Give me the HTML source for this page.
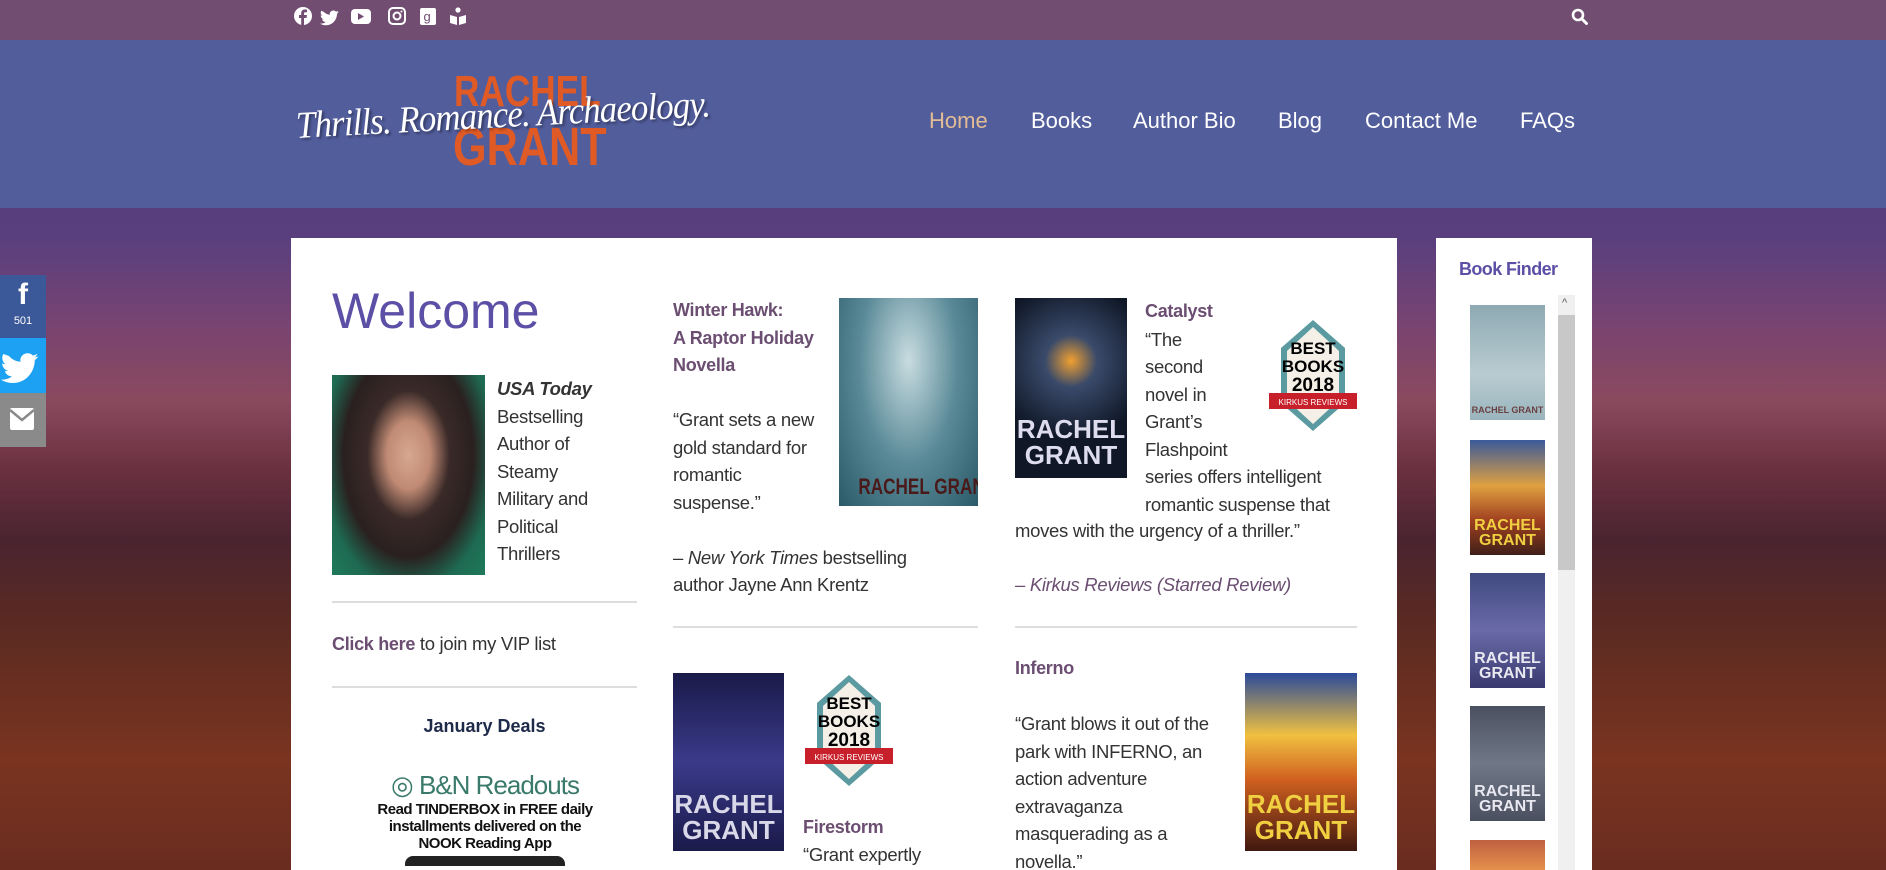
<!DOCTYPE html>
<html style="background:#5a2a2a"><head><meta charset="utf-8"><style>
*{margin:0;padding:0;box-sizing:border-box}
html,body{width:1886px;height:870px;overflow:hidden}
body{position:relative;font-family:"Liberation Sans",sans-serif;color:#333}
.bg{left:0;top:0;width:1886px;height:870px;background:linear-gradient(180deg,#4b3a78 0px,#5a3f7e 240px,#7a4470 330px,#8a4a5e 400px,#6a3040 470px,#4a2430 540px,#5a2a22 620px,#7a3420 760px,#6a2c20 870px)}
.a{position:absolute}
.top{left:0;top:0;width:1886px;height:40px;background:#714d72}
.hdr{left:0;top:40px;width:1886px;height:168px;background:#525d9c}
.nav{top:108px;font-size:22px;color:#fff}
.panel{left:291px;top:238px;width:1106px;height:640px;background:#fff}
.side{left:1436px;top:238px;width:156px;height:640px;background:#fff}
.t{font-size:18.5px;line-height:27.5px;color:#333;white-space:nowrap;letter-spacing:-.3px}
.h{color:#6b4e71;font-weight:bold;font-size:17.5px}
.hr{height:2px;background:#ddd}
.cover{color:#fff;font-weight:bold;text-align:center;overflow:hidden}
</style></head><body>
<div class="a bg"></div>
<div class="a top"></div>
<svg class="a" style="left:293px;top:6px" width="200" height="22" viewBox="0 0 200 22" fill="#fff">
<circle cx="10" cy="10" r="9"/><path d="M11 19v-7h2.5l.4-3H11V7.5c0-.8.3-1.3 1.4-1.3H14V3.6c-.3 0-1.2-.1-2.2-.1-2.2 0-3.6 1.3-3.6 3.7V9H6v3h2.2v7z" fill="#714d72"/>
<path d="M31 6c1.5 1.6 3.5 2.6 5.8 2.7-.5-2.3 1.400-4.200 3.600-4.200 1 0 1.900.4 2.600 1.100.8-.2 1.600-.5 2.300-.9-.3.800-.8 1.500-1.500 1.900.7-.1 1.400-.3 2-.6-.5.700-1.100 1.300-1.800 1.800 0 6-4.500 11.500-11 11.500-2.200 0-4.200-.6-5.900-1.700 2 .2 4-.4 5.500-1.600-1.700 0-3.100-1.100-3.600-2.700.6.100 1.200.100 1.700-.1-1.800-.4-3-2-3-3.800.5.300 1.100.5 1.700.5-1.600-1.100-2.200-3.400-1.100-5.200z"/>
<rect x="58" y="3" width="20" height="15" rx="4"/><path d="M65 7l6 3.5-6 3.5z" fill="#714d72"/>
<rect x="96" y="2" width="16" height="16" rx="4" fill="none" stroke="#fff" stroke-width="2"/><circle cx="104" cy="10" r="3.5" fill="none" stroke="#fff" stroke-width="2"/><circle cx="108.5" cy="5.5" r="1"/>
<rect x="127" y="2" width="16" height="17" rx="2"/><text x="130.5" y="15" font-size="13" fill="#714d72" font-family="Liberation Sans">g</text>
<circle cx="165" cy="4" r="2.6"/><path d="M157 9l7 2v8l-7-2zM173 9l-7 2v8l7-2z"/>
</svg>
<svg class="a" style="left:1571px;top:8px" width="18" height="18" viewBox="0 0 18 18"><circle cx="7" cy="7" r="5" fill="none" stroke="#fff" stroke-width="2.6"/><path d="M10.5 10.5l5 5" stroke="#fff" stroke-width="3" stroke-linecap="round"/></svg>
<div class="a hdr"></div>
<div class="a" style="left:296px;top:70px;width:430px;height:108px">
<div class="a" style="left:158px;top:0px;font:bold 44px/44px 'Liberation Sans Narrow','Liberation Sans',sans-serif;color:#e05a26;transform:scaleX(.8);transform-origin:left">RACHEL</div>
<div class="a" style="left:157px;top:50px;font:bold 54px/54px 'Liberation Sans Narrow','Liberation Sans',sans-serif;color:#e05a26;transform:scaleX(.8);transform-origin:left">GRANT</div>
<div class="a" style="left:0;top:36px;font:italic 38px/40px 'Liberation Serif',serif;color:#fff;white-space:nowrap;letter-spacing:-1px;text-shadow:2px 2px 3px rgba(0,0,0,.4);transform:rotate(-3deg) scaleX(.92);transform-origin:left">Thrills. Romance. Archaeology.</div>
</div>
<div class="a nav" style="left:929px;color:#e2bc94">Home</div>
<div class="a nav" style="left:1031px">Books</div>
<div class="a nav" style="left:1133px">Author Bio</div>
<div class="a nav" style="left:1278px">Blog</div>
<div class="a nav" style="left:1365px">Contact Me</div>
<div class="a nav" style="left:1520px">FAQs</div>

<div class="a" style="left:0;top:275px;width:46px;height:63px;background:#3b5998;color:#fff;text-align:center;font-size:11px"><div style="font:bold 30px/40px 'Liberation Sans'">f</div>501</div>
<div class="a" style="left:0;top:338px;width:46px;height:55px;background:#1da1f2"><svg width="46" height="55" viewBox="0 0 46 55"><path d="M9 18c3 3.500 7 5.500 11.500 5.700-1-4.500 2.800-8.400 7.200-8.400 2 0 3.800.8 5.100 2.200 1.600-.3 3.200-.9 4.600-1.800-.6 1.600-1.600 3-3 3.800 1.400-.2 2.700-.6 4-1.100-1 1.400-2.200 2.600-3.600 3.600 0 12-9 23-22 23-4.400 0-8.400-1.200-11.800-3.400 4 .4 8-.8 11-3.200-3.400 0-6.200-2.200-7.200-5.400 1.200.2 2.400.2 3.400-.2-3.600-.8-6-4-6-7.600 1 .6 2.200 1 3.400 1-3.200-2.200-4.400-6.800-2.200-10.200z" fill="#fff"/></svg></div>
<div class="a" style="left:0;top:393px;width:46px;height:54px;background:#8a8a8a"><svg width="46" height="54" viewBox="0 0 46 54"><rect x="10" y="15" width="24" height="22" rx="2" fill="#fff"/><path d="M10 17l12 10 12-10" fill="none" stroke="#8a8a8a" stroke-width="2.5"/></svg></div>

<div class="a panel"></div>
<div class="a side"></div>
<div class="a" style="left:1459px;top:259px;font:bold 18px 'Liberation Sans';color:#5b4fa6;letter-spacing:-.6px">Book Finder</div>
<div class="a" style="left:1558px;top:295px;width:17px;height:580px;background:#f0f0f0"></div>
<div class="a" style="left:1558px;top:315px;width:17px;height:255px;background:#c8c8c8"></div>
<div class="a" style="left:1562px;top:297px;font-size:11px;color:#555">^</div>
<div class="a cover" style="left:1470px;top:305px;width:75px;height:115px;background:linear-gradient(#8ea9b3,#b8ccd1 60%,#9ab4bd);color:#6a4040;font-size:9px;padding-top:100px;white-space:nowrap">RACHEL GRANT</div>
<div class="a cover" style="left:1470px;top:440px;width:75px;height:115px;background:linear-gradient(#3a5a9a,#e0a040 40%,#a04020 70%,#402018);color:#f0d040;font-size:16px;line-height:15px;padding-top:78px">RACHEL<br>GRANT</div>
<div class="a cover" style="left:1470px;top:573px;width:75px;height:115px;background:linear-gradient(#404a80,#6a6aa8 50%,#3a3a70);font-size:16px;line-height:15px;padding-top:78px;color:#e8e8f0">RACHEL<br>GRANT</div>
<div class="a cover" style="left:1470px;top:706px;width:75px;height:115px;background:linear-gradient(#4a5060,#707888 50%,#4a5060);font-size:16px;line-height:15px;padding-top:78px;color:#e8e8f0">RACHEL<br>GRANT</div>
<div class="a" style="left:1470px;top:840px;width:75px;height:40px;background:linear-gradient(#c06040,#f0a050)"></div>

<div class="a" style="left:332px;top:282px;font-size:50px;color:#5b4fa6">Welcome</div>
<div class="a" style="left:332px;top:375px;width:153px;height:200px;background:radial-gradient(ellipse at 50% 40%,#d8a890 0,#c08a74 20%,#3a2a28 38%,#2a2020 60%,#1e6a52 80%,#1e7a5a)"></div>
<div class="a t" style="left:497px;top:375px"><i><b>USA Today</b></i><br>Bestselling<br>Author of<br>Steamy<br>Military and<br>Political<br>Thrillers</div>
<div class="a hr" style="left:332px;top:601px;width:305px"></div>
<div class="a t" style="left:332px;top:630px"><span class="h" style="font-size:18px">Click here</span> to join my VIP list</div>
<div class="a hr" style="left:332px;top:686px;width:305px"></div>
<div class="a" style="left:332px;top:716px;width:305px;text-align:center;font-weight:bold;font-size:18px;color:#1e2a4a">January Deals</div>
<div class="a" style="left:367px;top:770px;width:236px;height:110px;text-align:center;background:#fff;white-space:nowrap">
<div style="font-size:26px;color:#3a7a6a;letter-spacing:-1px">◎ B&amp;N Readouts</div>
<div style="font:bold 15px/17px 'Liberation Sans Narrow','Liberation Sans';color:#111;letter-spacing:-.5px">Read TINDERBOX in FREE daily<br>installments delivered on the<br>NOOK Reading App</div>
<div style="margin:4px auto 0;width:160px;height:10px;background:#222;border-radius:8px 8px 0 0"></div></div>

<div class="a t h" style="left:673px;top:297px;font-size:18px">Winter Hawk:<br>A Raptor Holiday<br>Novella</div>
<div class="a t" style="left:673px;top:406px">“Grant sets a new<br>gold standard for<br>romantic<br>suspense.”<br><br>– <i>New York Times</i> bestselling<br>author Jayne Ann Krentz</div>
<div class="a cover" style="left:839px;top:298px;width:139px;height:208px;background:radial-gradient(ellipse at 50% 30%,#c8dce0,#5a8a98 50%,#2a5a68);color:#4a1a1a;padding-top:176px;white-space:nowrap"><span style="display:inline-block;font:bold 22px 'Liberation Sans Narrow','Liberation Sans';transform:scaleX(.78)">RACHEL GRANT</span></div>
<div class="a hr" style="left:673px;top:626px;width:305px"></div>
<div class="a cover" style="left:673px;top:673px;width:111px;height:178px;background:linear-gradient(#1a1a4a,#3a3a8a 50%,#1a1a4a);font-size:26px;line-height:26px;padding-top:118px;color:#d8d8e8">RACHEL<br>GRANT</div>
<svg class="a" style="left:803px;top:673px" width="92" height="115" viewBox="0 0 92 115"><path d="M46 2L78 30V85L46 113L14 85V30Z" fill="#5a9aa0"/><path d="M46 9L72 33V82L46 106L20 82V33Z" fill="#f4f0e8"/><rect x="2" y="75" width="88" height="16" fill="#c8202a"/><text x="46" y="36" font-size="17" font-weight="bold" text-anchor="middle" font-family="Liberation Sans Narrow,Liberation Sans">BEST</text><text x="46" y="54" font-size="17" font-weight="bold" text-anchor="middle" font-family="Liberation Sans Narrow,Liberation Sans">BOOKS</text><text x="46" y="73" font-size="19" font-weight="bold" text-anchor="middle" font-family="Liberation Sans Narrow,Liberation Sans">2018</text><text x="46" y="87" font-size="8" fill="#fff" text-anchor="middle" font-family="Liberation Sans">KIRKUS REVIEWS</text></svg>
<div class="a t h" style="left:803px;top:814px;font-size:18px">Firestorm</div>
<div class="a t" style="left:803px;top:841px">“Grant expertly</div>

<div class="a cover" style="left:1015px;top:298px;width:112px;height:180px;background:radial-gradient(circle at 50% 35%,#f0a030 0,#3a4a6a 20%,#101828 60%);font-size:26px;line-height:26px;padding-top:118px;color:#dde">RACHEL<br>GRANT</div>
<div class="a t" style="left:1145px;top:297px"><span class="h" style="font-size:18px">Catalyst</span><br>“The<br>second<br>novel in<br>Grant’s<br>Flashpoint<br>series offers intelligent<br>romantic suspense that</div>
<div class="a t" style="left:1015px;top:517px">moves with the urgency of a thriller.”</div>
<div class="a t" style="left:1015px;top:571px;color:#6b4e71"><i>– Kirkus Reviews (Starred Review)</i></div>
<svg class="a" style="left:1267px;top:318px" width="92" height="115" viewBox="0 0 92 115"><path d="M46 2L78 30V85L46 113L14 85V30Z" fill="#5a9aa0"/><path d="M46 9L72 33V82L46 106L20 82V33Z" fill="#f4f0e8"/><rect x="2" y="75" width="88" height="16" fill="#c8202a"/><text x="46" y="36" font-size="17" font-weight="bold" text-anchor="middle" font-family="Liberation Sans Narrow,Liberation Sans">BEST</text><text x="46" y="54" font-size="17" font-weight="bold" text-anchor="middle" font-family="Liberation Sans Narrow,Liberation Sans">BOOKS</text><text x="46" y="73" font-size="19" font-weight="bold" text-anchor="middle" font-family="Liberation Sans Narrow,Liberation Sans">2018</text><text x="46" y="87" font-size="8" fill="#fff" text-anchor="middle" font-family="Liberation Sans">KIRKUS REVIEWS</text></svg>
<div class="a hr" style="left:1015px;top:626px;width:342px"></div>
<div class="a t h" style="left:1015px;top:655px;font-size:18px">Inferno</div>
<div class="a t" style="left:1015px;top:710px">“Grant blows it out of the<br>park with INFERNO, an<br>action adventure<br>extravaganza<br>masquerading as a<br>novella.”</div>
<div class="a cover" style="left:1245px;top:673px;width:112px;height:178px;background:linear-gradient(#2a4a9a,#f0c040 35%,#d06020 60%,#401810);font-size:26px;line-height:26px;padding-top:118px;color:#f0d040">RACHEL<br>GRANT</div>
</body></html>
